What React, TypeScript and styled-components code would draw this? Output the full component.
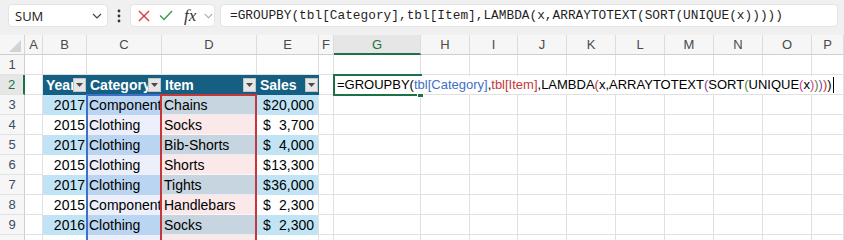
import React from 'react';
import styled, { createGlobalStyle, css } from 'styled-components';

const GlobalStyle = createGlobalStyle`
  html, body { margin: 0; padding: 0; background: #ffffff; overflow: hidden; }
  body { font-family: "Liberation Sans", Arial, sans-serif; }
`;

const GRID = '#e1e1e1';
const BAND = '#c0e4f5';
const HEAD = '#156082';
const GREEN = '#1e7145';
const REF_BLUE = '#3f70c8';
const REF_RED = '#c4383a';

const Window = styled.div`
  width: 844px;
  height: 240px;
  overflow: hidden;
  display: flex;
  flex-direction: column;
  background: #fff;
`;

const Toolbar = styled.div`
  flex: none;
  height: 35px;
  box-sizing: border-box;
  padding: 4px 0 0 8px;
  background: #f0f0f0;
  display: flex;
  align-items: flex-start;
`;

const Box = styled.div`
  height: 23px;
  box-sizing: border-box;
  background: #ffffff;
  border: 1px solid #e4e4e4;
  border-radius: 4px;
  display: flex;
  align-items: center;
`;

const NameBox = styled(Box)`
  width: 100px;
  padding: 0 5px 0 6px;
  justify-content: space-between;
  font-family: "Open Sans", "Liberation Sans", sans-serif;
  font-size: 13px;
  color: #1a1a1a;
`;

const Dots = styled.div`
  width: 22px;
  height: 23px;
  display: flex;
  align-items: center;
  justify-content: center;
`;

const ActionBox = styled(Box)`
  width: 85px;
  padding: 0 0 0 7px;
`;

const IconSlot = styled.span<{ $w: number }>`
  width: ${(p) => p.$w}px;
  display: flex;
  align-items: center;
  justify-content: flex-start;
`;

const Fx = styled.span`
  font-family: "Liberation Serif", "Times New Roman", serif;
  font-style: italic;
  font-size: 17px;
  color: #333;
  width: 20px;
  line-height: 20px;
`;

const FormulaBox = styled(Box)`
  flex: 1;
  margin-left: 5px;
  margin-right: 6px;
  padding-left: 9px;
  font-family: "Liberation Mono", "Courier New", monospace;
  font-size: 12.8px;
  color: #1f1f1f;
  white-space: nowrap;
  overflow: hidden;
`;

const Sheet = styled.div`
  flex: 1;
  display: grid;
  grid-template-columns: 25px 18px 44px 75px 95px 62px 15px 87px 49px 48px repeat(6, 49px) 1fr;
  grid-auto-rows: 20px;
  overflow: hidden;
`;

const At = css<{ $r: number; $c: number }>`
  grid-row: ${(p) => p.$r};
  grid-column: ${(p) => p.$c};
  box-sizing: border-box;
  min-width: 0;
`;

const Corner = styled.div<{ $r: number; $c: number }>`
  ${At};
  background: #f6f6f6;
  border-right: 1px solid #d6d6d6;
  border-bottom: 1px solid #cfcfcf;
  display: flex;
  align-items: flex-end;
  justify-content: flex-end;
  padding: 0 3px 2px 0;
`;

const ColHead = styled.div<{ $r: number; $c: number; $active?: boolean }>`
  ${At};
  background: ${(p) => (p.$active ? '#e6e6e6' : '#f6f6f6')};
  border-right: 1px solid #dcdcdc;
  border-bottom: ${(p) => (p.$active ? `2px solid ${GREEN}` : '1px solid #cfcfcf')};
  color: ${(p) => (p.$active ? GREEN : '#4a4a4a')};
  font-size: 13px;
  display: flex;
  align-items: center;
  justify-content: center;
  padding-top: ${(p) => (p.$active ? '1px' : '0')};
`;

const RowHead = styled.div<{ $r: number; $c: number; $active?: boolean }>`
  ${At};
  background: ${(p) => (p.$active ? '#e6e6e6' : '#f6f6f6')};
  border-right: ${(p) => (p.$active ? `2px solid ${GREEN}` : '1px solid #cfcfcf')};
  border-bottom: 1px solid #e2e2e2;
  color: ${(p) => (p.$active ? GREEN : '#3c4a5c')};
  font-size: 13px;
  display: flex;
  align-items: center;
  justify-content: center;
`;

const Cell = styled.div<{ $r: number; $c: number }>`
  ${At};
  border-right: 1px solid ${GRID};
  border-bottom: 1px solid ${GRID};
  background: #fff;
`;

const THead = styled.div<{ $r: number; $c: number }>`
  ${At};
  background: ${HEAD};
  color: #ffffff;
  font-weight: bold;
  font-size: 14px;
  display: flex;
  align-items: center;
  padding-left: 3px;
  border-bottom: 1px solid ${HEAD};
`;

const THeadText = styled.span`
  flex: 1;
  min-width: 0;
  overflow: hidden;
  white-space: nowrap;
  line-height: 18px;
`;

const FilterButton = styled.span`
  flex: none;
  width: 13px;
  height: 14px;
  margin-right: 1px;
  box-sizing: border-box;
  background: #e6e6e6;
  border: 1px solid #c4c4c4;
  display: flex;
  align-items: center;
  justify-content: center;
`;

type Tint = 'none' | 'blue' | 'red';

const bgFor = (band: boolean, tint: Tint) => {
  if (tint === 'blue') return band ? '#bad5f1' : '#edf0fb';
  if (tint === 'red') return band ? '#c6d5df' : '#fbe8e9';
  return band ? BAND : '#ffffff';
};

const TCell = styled.div<{ $r: number; $c: number; $band: boolean; $tint: Tint; $align: 'left' | 'right' | 'money'; $edge?: boolean }>`
  ${At};
  background: ${(p) => bgFor(p.$band, p.$tint)};
  border-right: 1px solid ${(p) => (p.$edge ? GRID : p.$tint === 'red' ? 'rgba(255,255,255,0.55)' : bgFor(p.$band, p.$tint))};
  border-bottom: 1px solid ${(p) => (p.$tint === 'red' ? 'rgba(255,255,255,0.55)' : bgFor(p.$band, p.$tint))};
  font-size: 14px;
  line-height: 18px;
  color: #000;
  white-space: nowrap;
  overflow: hidden;
  display: flex;
  align-items: flex-end;
  justify-content: ${(p) => (p.$align === 'right' ? 'flex-end' : p.$align === 'money' ? 'space-between' : 'flex-start')};
  padding: ${(p) => (p.$align === 'right' ? '0 1px 0 0' : p.$align === 'money' ? '0 4px 0 6px' : '0 0 0 2px')};
`;

const RangeBox = styled.div<{ $c: number; $color: string; $shift: number }>`
  grid-column: ${(p) => p.$c};
  grid-row: 4 / 13;
  margin-left: ${(p) => p.$shift}px;
  margin-top: -1px;
  border: 2px solid ${(p) => p.$color};
  border-bottom: none;
  pointer-events: none;
  z-index: 2;
`;

const ActiveCell = styled.div`
  grid-column: 8;
  grid-row: 3;
  margin: -1px;
  border: 2px solid ${GREEN};
  position: relative;
  z-index: 3;
`;

const Handle = styled.span`
  position: absolute;
  right: -4px;
  bottom: -4px;
  width: 5px;
  height: 5px;
  background: ${GREEN};
  border: 1px solid #fff;
`;

const Editor = styled.div`
  grid-column: 8 / 18;
  grid-row: 3;
  margin: 1px 3px 1px 1px;
  padding-left: 2px;
  background: #fff;
  z-index: 4;
  font-size: 13px;
  line-height: 18px;
  white-space: nowrap;
  display: flex;
  align-items: flex-end;
  color: #000;
`;

const Tok = styled.span<{ $c: string }>`
  color: ${(p) => p.$c};
`;

const Caret = styled.span`
  width: 1px;
  height: 16px;
  background: #000;
  margin: 0 0 1px 1px;
  align-self: flex-end;
`;

const Chevron = ({ color = '#444', w = 10 }: { color?: string; w?: number }) => (
  <svg width={w} height={6} viewBox="0 0 10 6">
    <path d="M1 1 L5 5 L9 1" fill="none" stroke={color} strokeWidth="1.2" />
  </svg>
);

const Triangle = () => (
  <svg width={7} height={4} viewBox="0 0 7 4">
    <path d="M0 0 H7 L3.5 4 Z" fill="#4a4a4a" />
  </svg>
);

const colLetters = ['A', 'B', 'C', 'D', 'E', 'F', 'G', 'H', 'I', 'J', 'K', 'L', 'M', 'N', 'O', 'P'];

type Row = { year: string; cat: string; item: string; sales: string };
const rows: Row[] = [
  { year: '2017', cat: 'Component', item: 'Chains', sales: '20,000' },
  { year: '2015', cat: 'Clothing', item: 'Socks', sales: '3,700' },
  { year: '2017', cat: 'Clothing', item: 'Bib-Shorts', sales: '4,000' },
  { year: '2015', cat: 'Clothing', item: 'Shorts', sales: '13,300' },
  { year: '2017', cat: 'Clothing', item: 'Tights', sales: '36,000' },
  { year: '2015', cat: 'Component', item: 'Handlebars', sales: '2,300' },
  { year: '2016', cat: 'Clothing', item: 'Socks', sales: '2,300' },
  { year: '', cat: '', item: '', sales: '' },
];

const P1 = '#000000';
const P2 = '#c0392b';
const P3 = '#7b3fa0';
const P4 = '#4f8a1e';
const P5 = '#d0409a';

const formulaTokens: [string, string][] = [
  ['=GROUPBY', '#000'],
  ['(', P1],
  ['tbl[Category]', REF_BLUE],
  [',', '#000'],
  ['tbl[Item]', REF_RED],
  [',LAMBDA', '#000'],
  ['(', P2],
  ['x,ARRAYTOTEXT', '#000'],
  ['(', P3],
  ['SORT', '#000'],
  ['(', P4],
  ['UNIQUE', '#000'],
  ['(', P5],
  ['x', '#000'],
  [')', P5],
  [')', P4],
  [')', P3],
  [')', P2],
  [')', P1],
];

export default function App() {
  const cells: React.ReactNode[] = [];
  cells.push(
    <Corner key="corner" $r={1} $c={1}>
      <svg width={12} height={12} viewBox="0 0 12 12">
        <path d="M12 0 V12 H0 Z" fill="#d3d3d3" />
      </svg>
    </Corner>
  );
  colLetters.forEach((l, i) => {
    cells.push(
      <ColHead key={'h' + l} $r={1} $c={i + 2} $active={l === 'G'}>
        {l}
      </ColHead>
    );
  });
  for (let n = 1; n <= 10; n++) {
    const r = n + 1;
    cells.push(
      <RowHead key={'r' + n} $r={r} $c={1} $active={n === 2}>
        {n < 10 ? n : ''}
      </RowHead>
    );
    for (let c = 2; c <= 17; c++) {
      const inTable = n >= 2 && c >= 3 && c <= 6;
      if (!inTable) cells.push(<Cell key={`c${n}-${c}`} $r={r} $c={c} />);
    }
  }
  ['Year', 'Category', 'Item', 'Sales'].forEach((t, i) => {
    cells.push(
      <THead key={'th' + t} $r={3} $c={i + 3}>
        <THeadText>{t}</THeadText>
        <FilterButton>
          <Triangle />
        </FilterButton>
      </THead>
    );
  });
  rows.forEach((row, i) => {
    const n = i + 3;
    const r = n + 1;
    const band = n % 2 === 1;
    cells.push(
      <TCell key={'y' + n} $r={r} $c={3} $band={band} $tint="none" $align="right">
        {row.year}
      </TCell>,
      <TCell key={'k' + n} $r={r} $c={4} $band={band} $tint="blue" $align="left">
        {row.cat}
      </TCell>,
      <TCell key={'i' + n} $r={r} $c={5} $band={band} $tint="red" $align="left">
        {row.item}
      </TCell>,
      <TCell key={'s' + n} $r={r} $c={6} $band={band} $tint="none" $align="money" $edge>
        {row.sales && <span>$</span>}
        {row.sales && <span>{row.sales}</span>}
      </TCell>
    );
  });

  return (
    <>
      <GlobalStyle />
      <Window>
        <Toolbar>
          <NameBox>
            <span>SUM</span>
            <Chevron />
          </NameBox>
          <Dots>
            <svg width={4} height={14} viewBox="0 0 4 14">
              <circle cx="2" cy="2" r="1.4" fill="#333" />
              <circle cx="2" cy="7" r="1.4" fill="#333" />
              <circle cx="2" cy="12" r="1.4" fill="#333" />
            </svg>
          </Dots>
          <ActionBox>
            <IconSlot $w={21}>
              <svg width={12} height={12} viewBox="0 0 12 12">
                <path d="M1 1 L11 11 M11 1 L1 11" stroke="#d9363e" strokeWidth="1.4" fill="none" />
              </svg>
            </IconSlot>
            <IconSlot $w={25}>
              <svg width={14} height={11} viewBox="0 0 14 11">
                <path d="M1 5.5 L5 9.5 L13 1" stroke="#3a9a4a" strokeWidth="1.4" fill="none" />
              </svg>
            </IconSlot>
            <Fx>fx</Fx>
            <Chevron color="#a0a0a0" w={9} />
          </ActionBox>
          <FormulaBox>=GROUPBY(tbl[Category],tbl[Item],LAMBDA(x,ARRAYTOTEXT(SORT(UNIQUE(x)))))</FormulaBox>
        </Toolbar>
        <Sheet>
          {cells}
          <RangeBox $c={4} $color={REF_BLUE} $shift={-1} />
          <RangeBox $c={5} $color={REF_RED} $shift={-2} />
          <ActiveCell>
            <Handle />
          </ActiveCell>
          <Editor>
            {formulaTokens.map(([t, c], i) => (
              <Tok key={i} $c={c}>
                {t}
              </Tok>
            ))}
            <Caret />
          </Editor>
        </Sheet>
      </Window>
    </>
  );
}
